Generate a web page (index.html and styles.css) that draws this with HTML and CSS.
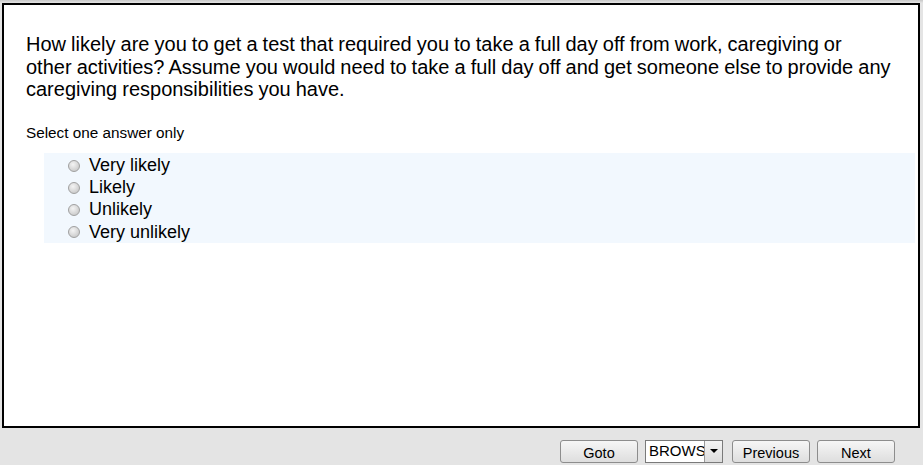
FILE: index.html
```html
<!DOCTYPE html>
<html lang="en">
<head>
<meta charset="UTF-8">
<title>Survey</title>
<link rel="stylesheet" href="styles.css">
</head>
<body>

<div class="frame">
  <p class="question">How likely are you to get a test that required you to take a full day off from work, caregiving or<br>other activities? Assume you would need to take a full day off and get someone else to provide any caregiving responsibilities you have.</p>

  <p class="hint">Select one answer only</p>

  <div class="answers">
    <label><input type="radio" name="q1"> Very likely</label>
    <label><input type="radio" name="q1"> Likely</label>
    <label><input type="radio" name="q1"> Unlikely</label>
    <label><input type="radio" name="q1"> Very unlikely</label>
  </div>
</div>

<div class="nav">
  <button class="btn">Goto</button>
  <div class="combo"><span>BROWSE</span><i class="arrow"></i></div>
  <button class="btn">Previous</button>
  <button class="btn">Next</button>
</div>

</body>
</html>
```

FILE: styles.css
```css
body {
  margin: 0;
  font-family: Arial, "Liberation Sans", sans-serif;
  background: #e4e4e4;
  color: #000;
  padding-top: 3px;
  height: 465px;
  box-sizing: border-box;
  background-image: linear-gradient(#c8c8c8, #e4e4e4 3px);
  background-repeat: no-repeat;
}
.frame {
  margin-left: 2px;
  width: 914px;
  height: 421px;
  border: 2px solid #000;
  background: #fff;
  overflow: hidden;
}
.question {
  margin: 28px 0 0 22px;
  width: 870px;
  font-size: 20px;
  line-height: 22.5px;
  word-spacing: -0.5px;
}
.hint {
  margin: 23px 0 0 22px;
  font-size: 15.3px;
  line-height: 18px;
}
.answers {
  margin: 11px 0 0 40px;
  width: 871px;
  background: #f2f8fe;
  padding: 2px 0 0 0;
}
.answers label {
  display: flex;
  align-items: center;
  height: 22.2px;
  padding-left: 21px;
  font-size: 18px;
}
.answers input {
  appearance: none;
  margin: 0 9px 0 3px;
  width: 12px;
  height: 12px;
  border-radius: 50%;
  border: 1px solid #a0a0a0;
  background: radial-gradient(circle at 40% 35%, #f4f4f4, #cfcfcf 70%);
  box-sizing: border-box;
}
.nav {
  display: flex;
  justify-content: flex-end;
  gap: 7px;
  padding: 12px 28px 0 0;
}
.btn {
  width: 78px;
  height: 23px;
  font-family: Arial, "Liberation Sans", sans-serif;
  font-size: 14.5px;
  color: #000;
  background: linear-gradient(#f6f6f6, #dedede);
  border: 1px solid #8d8d8d;
  border-radius: 3px;
  padding: 3px 0 0 0;
}
.combo {
  width: 76px;
  height: 21px;
  border: 1px solid #7a7a7a;
  background: #fff;
  display: flex;
  margin-right: 2px;
  font-size: 15px;
  line-height: 20px;
}
.combo span {
  flex: 1;
  overflow: hidden;
  padding-left: 3px;
  white-space: nowrap;
}
.arrow {
  width: 17px;
  border-left: 1px solid #999;
  background: linear-gradient(#f4f4f4, #dcdcdc);
  position: relative;
}
.arrow::after {
  content: "";
  position: absolute;
  left: 5px;
  top: 8px;
  border-left: 4px solid transparent;
  border-right: 4px solid transparent;
  border-top: 4px solid #000;
}
```
